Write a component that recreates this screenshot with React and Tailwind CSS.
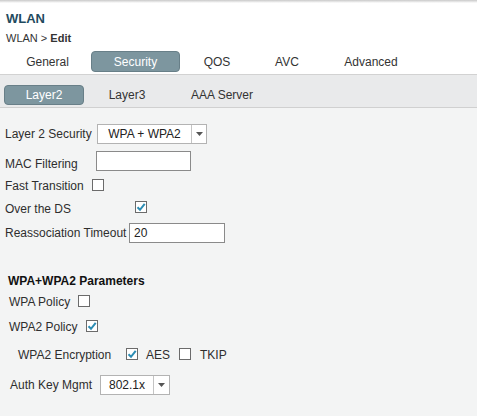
import React from 'react';

const CheckBox = ({ checked = false, className = '' }) => (
  <span className={`inline-flex w-[12px] h-[12px] bg-white border border-[#6b6b6b] items-center justify-center ${className}`}>
    {checked && (
      <svg width="10" height="10" viewBox="0 0 10 10">
        <path d="M1.5 5.2 L4 7.8 L8.7 1.8" fill="none" stroke="#2c8db4" strokeWidth="2" />
      </svg>
    )}
  </span>
);

const Select = ({ value, width, arrowWidth = 15 }) => (
  <span
    className="flex h-[20px] bg-white border border-[#b3b3b3] items-stretch"
    style={{ width }}
  >
    <span className="flex-1 flex items-center justify-center text-[#222]">{value}</span>
    <span
      className="flex items-center justify-center border-l border-[#c4c4c4]"
      style={{ width: arrowWidth }}
    >
      <svg width="7" height="4" viewBox="0 0 7 4">
        <path d="M0 0 L7 0 L3.5 4 Z" fill="#555" />
      </svg>
    </span>
  </span>
);

const TextInput = ({ value = '', width }) => (
  <span
    className="flex h-[20px] bg-white border border-[#8a8a8a] items-center pl-[4px] text-[#222]"
    style={{ width }}
  >
    {value}
  </span>
);

const App = () => {
  const tabs = [
    { label: 'General', w: 'w-[87px]' },
    { label: 'Security', w: 'w-[89px]', active: true },
    { label: 'QOS', w: 'w-[74px]' },
    { label: 'AVC', w: 'w-[66px]' },
    { label: 'Advanced', w: 'w-[102px]' },
  ];

  const subTabs = [
    { label: 'Layer2', w: 'w-[80px]', active: true },
    { label: 'Layer3', w: 'w-[86px]' },
    { label: 'AAA Server', w: 'w-[104px]' },
  ];

  return (
    <div
      className="w-[477px] h-[416px] overflow-hidden bg-[#f3f4f4] text-[12px] text-[#2e2e2e]"
      style={{ fontFamily: '"Liberation Sans", Arial, sans-serif' }}
    >
      {/* Header */}
      <div className="bg-white border-b border-[#d2d2d2]">
        <div className="h-[3px] bg-gradient-to-b from-[#c9c9c9] to-white" />
        <div className="pl-[6px] mt-[8px] leading-[16px] text-[13px] font-bold text-[#1f4b60]">WLAN</div>
        <div className="pl-[6px] mt-[4px] leading-[14px] text-[11px] text-[#333]">
          WLAN &gt; <span className="font-bold">Edit</span>
        </div>
        <div className="flex pl-[4px] mt-[6px] mb-[2px]">
          {tabs.map((t) => (
            <div
              key={t.label}
              className={`${t.w} h-[21px] flex items-center justify-center rounded-[4px] ${
                t.active ? 'bg-[#7d969f] border border-[#687f88] text-white' : 'text-[#333]'
              }`}
            >
              {t.label}
            </div>
          ))}
        </div>
      </div>

      {/* Sub tabs */}
      <div className="h-[33px] bg-[#e9eaeb] border-b border-[#d0d0d0] flex items-start pt-[10px] pl-[4px]">
        {subTabs.map((t) => (
          <div
            key={t.label}
            className={`${t.w} h-[20px] flex items-center justify-center rounded-[4px] ${
              t.active ? 'bg-[#7d969f] border border-[#687f88] text-white' : 'text-[#333]'
            }`}
          >
            {t.label}
          </div>
        ))}
      </div>

      {/* Form */}
      <div className="pt-[16px]">
        <div className="flex items-center h-[20px] pl-[5px]">
          <span className="w-[92px]">Layer 2 Security</span>
          <Select value="WPA + WPA2" width={110} />
        </div>

        <div className="flex items-center h-[20px] pl-[5px] mt-[7px]">
          <span className="w-[91px] pt-[5px]">MAC Filtering</span>
          <TextInput width={95} />
        </div>

        <div className="flex items-center h-[20px] pl-[5px] mt-[5px]">
          <span className="w-[87px]">Fast Transition</span>
          <CheckBox className="-mt-[3px]" />
        </div>

        <div className="flex items-center h-[20px] pl-[5px] mt-[3px]">
          <span className="w-[130px]">Over the DS</span>
          <CheckBox checked className="-mt-[4px]" />
        </div>

        <div className="flex items-center h-[20px] pl-[5px] mt-[4px]">
          <span className="w-[124px]">Reassociation Timeout</span>
          <TextInput value="20" width={96} />
        </div>

        <div className="flex items-center h-[20px] pl-[8px] mt-[28px] font-bold text-[#111]">
          WPA+WPA2 Parameters
        </div>

        <div className="flex items-center h-[20px] pl-[9px] mt-[1px]">
          <span className="w-[69px]">WPA Policy</span>
          <CheckBox className="-mt-[3px]" />
        </div>

        <div className="flex items-center h-[20px] pl-[9px] mt-[5px]">
          <span className="w-[77px]">WPA2 Policy</span>
          <CheckBox checked className="-mt-[3px]" />
        </div>

        <div className="flex items-center h-[20px] pl-[18px] mt-[8px]">
          <span className="w-[108px]">WPA2 Encryption</span>
          <CheckBox checked className="-mt-[3px]" />
          <span className="w-[41px] pl-[8px]">AES</span>
          <CheckBox className="-mt-[3px]" />
          <span className="pl-[9px]">TKIP</span>
        </div>

        <div className="flex items-center h-[20px] pl-[10px] mt-[10px]">
          <span className="w-[90px]">Auth Key Mgmt</span>
          <Select value="802.1x" width={70} arrowWidth={16} />
        </div>
      </div>
    </div>
  );
};

export default App;
